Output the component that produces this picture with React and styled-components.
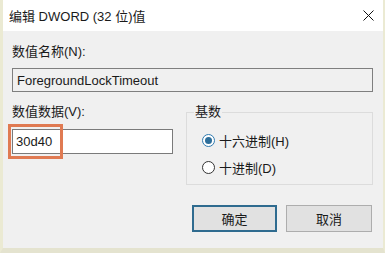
import React from 'react';
import styled, { createGlobalStyle } from 'styled-components';

const Global = createGlobalStyle`
  html, body { margin: 0; padding: 0; background: #f0f0f0; }
  body { font-family: "Liberation Sans", "Noto Sans CJK SC", sans-serif; color: #1a1a1a; }
`;

const Window = styled.div`
  width: 385px;
  height: 253px;
  box-sizing: border-box;
  border-left: 3px solid #ebead3;
  border-right: 2px solid #ebead3;
  border-bottom: 5px solid #e4e3cf;
  display: flex;
  flex-direction: column;
  background: #f0f0f0;
`;

const TitleBar = styled.div`
  height: 31px;
  flex: none;
  background: #ffffff;
  display: flex;
  align-items: center;
  justify-content: space-between;
  padding: 0 9px 0 6px;
  font-size: 13px;
`;

const CloseIcon = styled.svg`
  width: 11px;
  height: 11px;
  display: block;
`;

const Body = styled.div`
  flex: 1;
  display: flex;
  flex-direction: column;
  padding: 13px 10px 0 9px;
  font-size: 13px;
`;

const Label = styled.div`
  line-height: 16px;
  height: 16px;
`;

const NameBox = styled.div`
  margin-top: 8px;
  height: 24px;
  box-sizing: border-box;
  border: 1px solid #7f7f7f;
  background: #f0f0f0;
  display: flex;
  align-items: center;
  padding-left: 4px;
`;

const Row = styled.div`
  display: flex;
  margin-top: 12px;
`;

const LeftCol = styled.div`
  width: 161px;
  display: flex;
  flex-direction: column;
`;

const InputWrap = styled.div`
  position: relative;
  margin-top: 9px;
`;

const DataInput = styled.div`
  height: 25px;
  box-sizing: border-box;
  border: 1px solid #7a7a7a;
  background: #ffffff;
  display: flex;
  align-items: center;
  padding-left: 3px;
`;

const Highlight = styled.div`
  position: absolute;
  left: -4px;
  top: -5px;
  width: 55px;
  height: 35px;
  box-sizing: border-box;
  border: 3px solid #e07a52;
  pointer-events: none;
`;

const Group = styled.fieldset`
  flex: 1;
  margin: 0 0 0 13px;
  padding: 0 0 0 15px;
  height: 81px;
  box-sizing: border-box;
  border: 1px solid #dcdcdc;
  display: flex;
  flex-direction: column;
`;

const Legend = styled.legend`
  padding: 0 1px;
  margin-left: -8px;
  line-height: 16px;
  font-size: 13px;
`;

const RadioRow = styled.div`
  display: flex;
  align-items: center;
  gap: 4px;
  height: 16px;
  margin-top: ${p => p.$first ? '12px' : '11px'};
`;

const RadioDot = styled.span`
  width: 13px;
  height: 13px;
  box-sizing: border-box;
  border-radius: 50%;
  border: 1px solid ${p => p.$checked ? '#2f7bb0' : '#333333'};
  background: #ffffff;
  display: flex;
  align-items: center;
  justify-content: center;
  &::after {
    content: '';
    width: 7px;
    height: 7px;
    border-radius: 50%;
    background: ${p => p.$checked ? '#2d6e9a' : 'transparent'};
  }
`;

const ButtonRow = styled.div`
  display: flex;
  justify-content: flex-end;
  gap: 9px;
  margin-top: 20px;
  padding-right: 1px;
`;

const Button = styled.div`
  width: ${p => p.$w}px;
  height: 27px;
  box-sizing: border-box;
  background: #e1e1e1;
  border: ${p => p.$default ? '2px solid #2f6b8f' : '1px solid #adadad'};
  display: flex;
  align-items: center;
  justify-content: center;
  font-size: 13px;
`;

export default function App() {
  return (
    <>
      <Global />
      <Window>
        <TitleBar>
          <span>编辑 DWORD (32 位)值</span>
          <CloseIcon viewBox="0 0 11 11">
            <path d="M0.5 0.5 L10.5 10.5 M10.5 0.5 L0.5 10.5" stroke="#111" strokeWidth="1" fill="none" />
          </CloseIcon>
        </TitleBar>
        <Body>
          <Label>数值名称(N):</Label>
          <NameBox>ForegroundLockTimeout</NameBox>
          <Row>
            <LeftCol>
              <Label>数值数据(V):</Label>
              <InputWrap>
                <DataInput>30d40</DataInput>
                <Highlight />
              </InputWrap>
            </LeftCol>
            <Group>
              <Legend>基数</Legend>
              <RadioRow $first>
                <RadioDot $checked />
                <span>十六进制(H)</span>
              </RadioRow>
              <RadioRow>
                <RadioDot />
                <span>十进制(D)</span>
              </RadioRow>
            </Group>
          </Row>
          <ButtonRow>
            <Button $default $w={85}>确定</Button>
            <Button $w={86}>取消</Button>
          </ButtonRow>
        </Body>
      </Window>
    </>
  );
}
